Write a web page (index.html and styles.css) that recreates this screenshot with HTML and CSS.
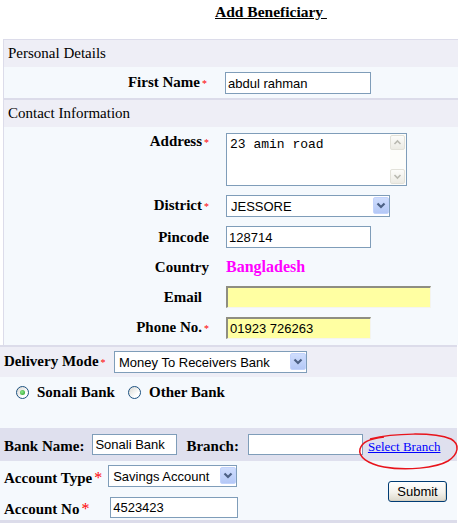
FILE: index.html
```html
<!DOCTYPE html>
<html lang="en">
<head>
  <meta charset="UTF-8" />
  <title>Add Beneficiary</title>
  <link rel="stylesheet" href="styles.css">
</head>
<body>
  <h1 class="title">Add Beneficiary&nbsp;</h1>

  <div class="panel">
    <div class="section-head first">Personal Details</div>
    <div class="fields single">
      <label class="lbl" for="first-name">First Name<span class="req">*</span></label>
      <input class="txt w146" id="first-name" type="text" value="abdul rahman" />
    </div>

    <div class="section-head">Contact Information</div>
    <div class="fields">
      <label class="lbl top" for="address">Address<span class="req">*</span></label>
      <div class="ta">
        <textarea id="address">23 amin road</textarea>
        <div class="sbar">
          <span class="sbtn"><svg width="13" height="13" viewBox="0 0 13 13"><polyline points="3.5,8 6.5,5 9.5,8" fill="none" stroke="#b9b9b1" stroke-width="1.6"/></svg></span>
          <span class="sbtn"><svg width="13" height="13" viewBox="0 0 13 13"><polyline points="3.5,5 6.5,8 9.5,5" fill="none" stroke="#b9b9b1" stroke-width="1.6"/></svg></span>
        </div>
      </div>

      <label class="lbl" for="district">District<span class="req">*</span></label>
      <span class="dd">
        <select id="district" class="w164"><option>JESSORE</option></select>
        <span class="dd-btn"><svg width="14" height="15" viewBox="0 0 14 15"><polyline points="3.5,5.5 7,9 10.5,5.5" fill="none" stroke="#4d6185" stroke-width="2.2"/></svg></span>
      </span>

      <label class="lbl" for="pincode">Pincode</label>
      <input class="txt w145" id="pincode" type="text" value="128714" />

      <span class="lbl">Country</span>
      <span class="country">Bangladesh</span>

      <label class="lbl pad-email" for="email">Email</label>
      <input class="txt yellow w205" id="email" type="text" value="" />

      <label class="lbl" for="phone">Phone No.<span class="req">*</span></label>
      <input class="txt yellow w145" id="phone" type="text" value="01923 726263" />
    </div>
  </div>

  <div class="delivery">
    <label class="lbl delivery-lbl" for="mode">Delivery Mode<span class="req">*</span></label>
    <span class="dd">
      <select id="mode" class="w193"><option>Money To Receivers Bank</option></select>
      <span class="dd-btn"><svg width="14" height="15" viewBox="0 0 14 15"><polyline points="3.5,5.5 7,9 10.5,5.5" fill="none" stroke="#4d6185" stroke-width="2.2"/></svg></span>
    </span>
  </div>

  <div class="radios">
    <span class="choice"><span class="radio on"></span>Sonali Bank</span>
    <span class="choice"><span class="radio"></span>Other Bank</span>
  </div>

  <div class="bank">
    <span class="lbl">Bank Name:</span>
    <input class="txt h21 bank-name" type="text" value="Sonali Bank" />
    <span class="lbl branch-lbl">Branch:</span>
    <input class="txt h21 branch" type="text" value="" />
    <a class="link" href="#">Select Branch</a>
    <svg class="circle" width="104" height="42" viewBox="0 0 104 42">
      <path d="M14 8 C38 2, 78 1, 95 8 C104 13, 103 23, 92 30 C80 37, 50 40, 28 36 C12 33, 2 26, 4 18 C6 11, 13 8, 28 6" fill="none" stroke="#e8141c" stroke-width="1.5"/>
    </svg>
  </div>

  <div class="account">
    <div class="acc-grid">
      <label class="lbl" for="acc-type">Account Type<span class="req big">*</span></label>
      <span class="dd">
        <select id="acc-type" class="w129"><option>Savings Account</option></select>
        <span class="dd-btn"><svg width="14" height="15" viewBox="0 0 14 15"><polyline points="3.5,5.5 7,9 10.5,5.5" fill="none" stroke="#4d6185" stroke-width="2.2"/></svg></span>
      </span>
      <label class="lbl" for="acc-no">Account No<span class="req big">*</span></label>
      <input class="txt h21 acc-no" id="acc-no" type="text" value="4523423" />
    </div>
    <button class="submit" type="button">Submit</button>
  </div>
</body>
</html>
```

FILE: styles.css
```css
body {
  margin: 0;
  font-family: "Liberation Serif", "Times New Roman", serif;
  font-size: 15px;
  line-height: 17px;
  color: #000;
  background: #fff;
}

.title {
  margin: 0 0 19px;
  padding: 3px 0 0 215px;
  font-size: 15.5px;
  line-height: 17px;
  font-weight: bold;
  text-decoration: underline;
}

.panel {
  margin-left: 3px;
  width: 454px;
  border-left: 1px solid #dcdcea;
  background: #f5f9fd;
}

.section-head {
  height: 27px;
  line-height: 27px;
  padding-left: 4px;
  background: #eeeef6;
  border-top: 2px solid #dcdcea;
}

.section-head.first {
  border-top-width: 1px;
}

.fields {
  display: grid;
  grid-template-columns: 205px 1fr;
  column-gap: 17px;
  row-gap: 9px;
  align-items: center;
  padding: 6px 0;
}

.fields.single {
  grid-template-columns: 203px 1fr;
  column-gap: 18px;
  padding: 5px 0 4px;
}

.lbl {
  text-align: right;
  font-weight: bold;
  white-space: nowrap;
}

.lbl.top {
  align-self: start;
}

.pad-email {
  padding-right: 7px;
}

.req {
  color: #f00;
  font-size: 10px;
  font-weight: normal;
  margin-left: 2px;
}

.req.big {
  font-size: 16px;
  margin-left: 2px;
}

.country {
  color: #f0f;
  font-weight: bold;
  font-size: 16px;
  line-height: 20px;
}

.txt {
  box-sizing: border-box;
  justify-self: start;
  height: 22px;
  padding: 0 2px;
  border: 1px solid #7f9db9;
  background: #fff;
  color: #000;
  font: 13px "Liberation Sans", Arial, sans-serif;
  outline: none;
}

.txt.h21 {
  height: 21px;
}

.txt.yellow {
  background: #ffffa2;
  border-width: 2px 1px 1px 2px;
  border-color: #8e8e82 #f4f4ee #f4f4ee #8e8e82;
}

.w145 { width: 145px; }
.w146 { width: 146px; }
.w205 { width: 205px; }

.ta {
  box-sizing: border-box;
  display: flex;
  width: 181px;
  height: 53px;
  border: 1px solid #7f9db9;
  background: #fff;
}

.ta textarea {
  flex: 1;
  border: 0;
  margin: 0;
  padding: 3px;
  resize: none;
  overflow: hidden;
  outline: none;
  font: 13px/15px "Liberation Mono", "Courier New", monospace;
}

.sbar {
  width: 16px;
  display: flex;
  flex-direction: column;
  justify-content: space-between;
  padding: 1px 0;
  background: #fdfdfa;
}

.sbtn {
  box-sizing: border-box;
  width: 15px;
  height: 15px;
  border: 1px solid #e2e1d9;
  border-radius: 2px;
  background: linear-gradient(#fcfcfa, #ecebe4);
  display: flex;
}

.dd {
  position: relative;
  display: inline-block;
  justify-self: start;
  height: 22px;
}

.dd select {
  box-sizing: border-box;
  appearance: none;
  height: 22px;
  margin: 0;
  padding: 0 18px 0 4px;
  border: 1px solid #7f9db9;
  border-radius: 0;
  background: #fff;
  color: #000;
  font: 13px "Liberation Sans", Arial, sans-serif;
  outline: none;
}

.w164 { width: 164px; }
.w193 { width: 193px; }
.w129 { width: 129px; }

.dd-btn {
  position: absolute;
  top: 2px;
  right: 1px;
  width: 16px;
  height: 17px;
  box-sizing: border-box;
  border: 1px solid #c2d3fc;
  border-radius: 2px;
  background: linear-gradient(#cfddfd, #b4c8f6);
  display: flex;
  align-items: center;
  justify-content: center;
  pointer-events: none;
}

.delivery {
  box-sizing: border-box;
  width: 457px;
  display: flex;
  align-items: center;
  padding: 4px 0 4px 4px;
  background: #eeeef6;
  border-top: 2px solid #dcdcea;
}

.delivery-lbl {
  width: 106px;
  margin-right: 4px;
  text-align: left;
}

.radios {
  box-sizing: border-box;
  width: 457px;
  height: 51px;
  display: flex;
  align-items: flex-start;
  padding: 7px 0 0 16px;
  background: #f5f9fd;
}

.choice {
  display: flex;
  align-items: center;
  gap: 8px;
  margin-right: 13px;
  font-weight: bold;
}

.radio {
  box-sizing: border-box;
  width: 13px;
  height: 13px;
  border: 1px solid #1c5180;
  border-radius: 50%;
  background: linear-gradient(135deg, #d8d8d2, #fff 70%);
  display: flex;
  align-items: center;
  justify-content: center;
}

.radio.on::after {
  content: "";
  width: 5px;
  height: 5px;
  border-radius: 50%;
  background: radial-gradient(circle at 40% 40%, #8ee88e, #1e9c1e);
}

.bank {
  position: relative;
  box-sizing: border-box;
  width: 457px;
  height: 33px;
  display: flex;
  align-items: flex-end;
  padding: 6px 0 6px 4px;
  background: #dfe0ee;
}

.bank-name {
  width: 85px;
  margin-left: 8px;
}

.branch-lbl {
  margin-left: 9px;
}

.branch {
  width: 115px;
  margin-left: 9px;
}

.link {
  margin-left: 5px;
  font-size: 13px;
  color: #00f;
}

.circle {
  position: absolute;
  left: 356px;
  top: 3px;
}

.account {
  box-sizing: border-box;
  width: 457px;
  display: flex;
  align-items: center;
  padding: 4px 0 2px 4px;
  background: #f5f9fd;
  border-bottom: 3px solid #dcdcea;
}

.acc-grid {
  display: grid;
  grid-template-columns: auto auto;
  column-gap: 6px;
  row-gap: 10px;
  align-items: end;
}

.acc-grid .lbl {
  text-align: left;
}

.acc-no {
  width: 128px;
  margin-left: 2px;
}

.submit {
  box-sizing: border-box;
  width: 59px;
  height: 21px;
  margin: 0 10px 0 auto;
  padding: 0;
  border: 1px solid #003c74;
  border-radius: 3px;
  background: linear-gradient(#ffffff, #f3f2ec 55%, #dcd8cb);
  box-shadow: inset -1px -1px 0 #d6d0c0;
  font: 13px "Liberation Sans", Arial, sans-serif;
  color: #000;
}
```
